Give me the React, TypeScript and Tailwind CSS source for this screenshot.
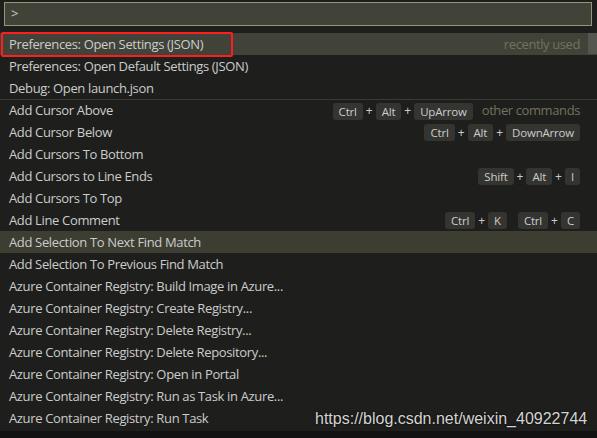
type Row = {
    label: string;
    keys?: string[][];
    note?: string;
    active?: boolean;
    hover?: boolean;
    border?: boolean;
};

const rows: Row[] = [
    { label: "Preferences: Open Settings (JSON)", note: "recently used", active: true },
    { label: "Preferences: Open Default Settings (JSON)" },
    { label: "Debug: Open launch.json" },
    { label: "Add Cursor Above", keys: [["Ctrl", "Alt", "UpArrow"]], note: "other commands", border: true },
    { label: "Add Cursor Below", keys: [["Ctrl", "Alt", "DownArrow"]] },
    { label: "Add Cursors To Bottom" },
    { label: "Add Cursors to Line Ends", keys: [["Shift", "Alt", "I"]] },
    { label: "Add Cursors To Top" },
    { label: "Add Line Comment", keys: [["Ctrl", "K"], ["Ctrl", "C"]] },
    { label: "Add Selection To Next Find Match", hover: true },
    { label: "Add Selection To Previous Find Match" },
    { label: "Azure Container Registry: Build Image in Azure..." },
    { label: "Azure Container Registry: Create Registry..." },
    { label: "Azure Container Registry: Delete Registry..." },
    { label: "Azure Container Registry: Delete Repository..." },
    { label: "Azure Container Registry: Open in Portal" },
    { label: "Azure Container Registry: Run as Task in Azure..." },
    { label: "Azure Container Registry: Run Task" },
];

function Chord({ keys }: { keys: string[] }) {
    return (
        <div className="flex items-center">
            {keys.map((k, i) => (
                <div key={k + i} className="flex items-center">
                    {i > 0 && <span className="mx-[3px] text-[12px] text-[#cccccc]">+</span>}
                    <span className="h-[17px] px-[6px] rounded-[3px] bg-[#343431] text-[11.5px] leading-[17px] tracking-[-0.2px] text-[#cccccc]">{k}</span>
                </div>
            ))}
        </div>
    );
}

export default function App() {
    return (
        <div className="relative w-[597px] h-[438px] bg-[#1e1f1c] overflow-hidden" style={{ fontFamily: '"Open Sans", "Noto Sans", sans-serif' }}>
            <div className="pt-[2px] pl-[4px] pr-[5px]">
                <div className="h-[24px] border border-[#99947c] bg-[#414339] flex items-center pl-[6px] text-[13px] text-[#cccccc]">&gt;</div>
            </div>

            <div className="mt-[7px]">
                {rows.map((r) => (
                    <div
                        key={r.label}
                        className={`h-[22px] flex items-center pt-[1px] pl-[9px] pr-[17px] text-[13px] text-[#cccccc] ${r.active ? "bg-[#414339]" : r.hover ? "bg-[#3e3d32]" : ""} ${r.border ? "border-t border-[#3a3a36]" : ""}`}
                    >
                        <span className="whitespace-nowrap tracking-[-0.35px]">{r.label}</span>
                        <div className="ml-auto flex items-center gap-[11px]">
                            {r.keys?.map((c, i) => <Chord key={i} keys={c} />)}
                            {r.note && <span className="text-[#75715e] text-[13px] tracking-[-0.4px] ml-[-2px]">{r.note}</span>}
                        </div>
                    </div>
                ))}
            </div>

            <div className="absolute left-0 right-0 bottom-0 h-[7px] bg-[#121212]" />

            {/* scrollbar thumb */}
            <div className="absolute left-[588px] top-[33px] w-[9px] h-[21px] bg-[#565651]" />

            {/* red annotation box */}
            <div className="absolute left-[1px] top-[32px] w-[232px] h-[25px] border-2 border-[#ff1e1e] rounded-[2px]" />

            {/* watermark */}
            <div
                className="absolute left-[315px] top-[407px] text-[16px] text-[#d4d4d4] whitespace-nowrap"
                style={{ fontFamily: '"Liberation Sans", Arial, sans-serif', textShadow: "0 0 2px #000" }}
            >
                https://blog.csdn.net/weixin_40922744
            </div>
        </div>
    );
}
